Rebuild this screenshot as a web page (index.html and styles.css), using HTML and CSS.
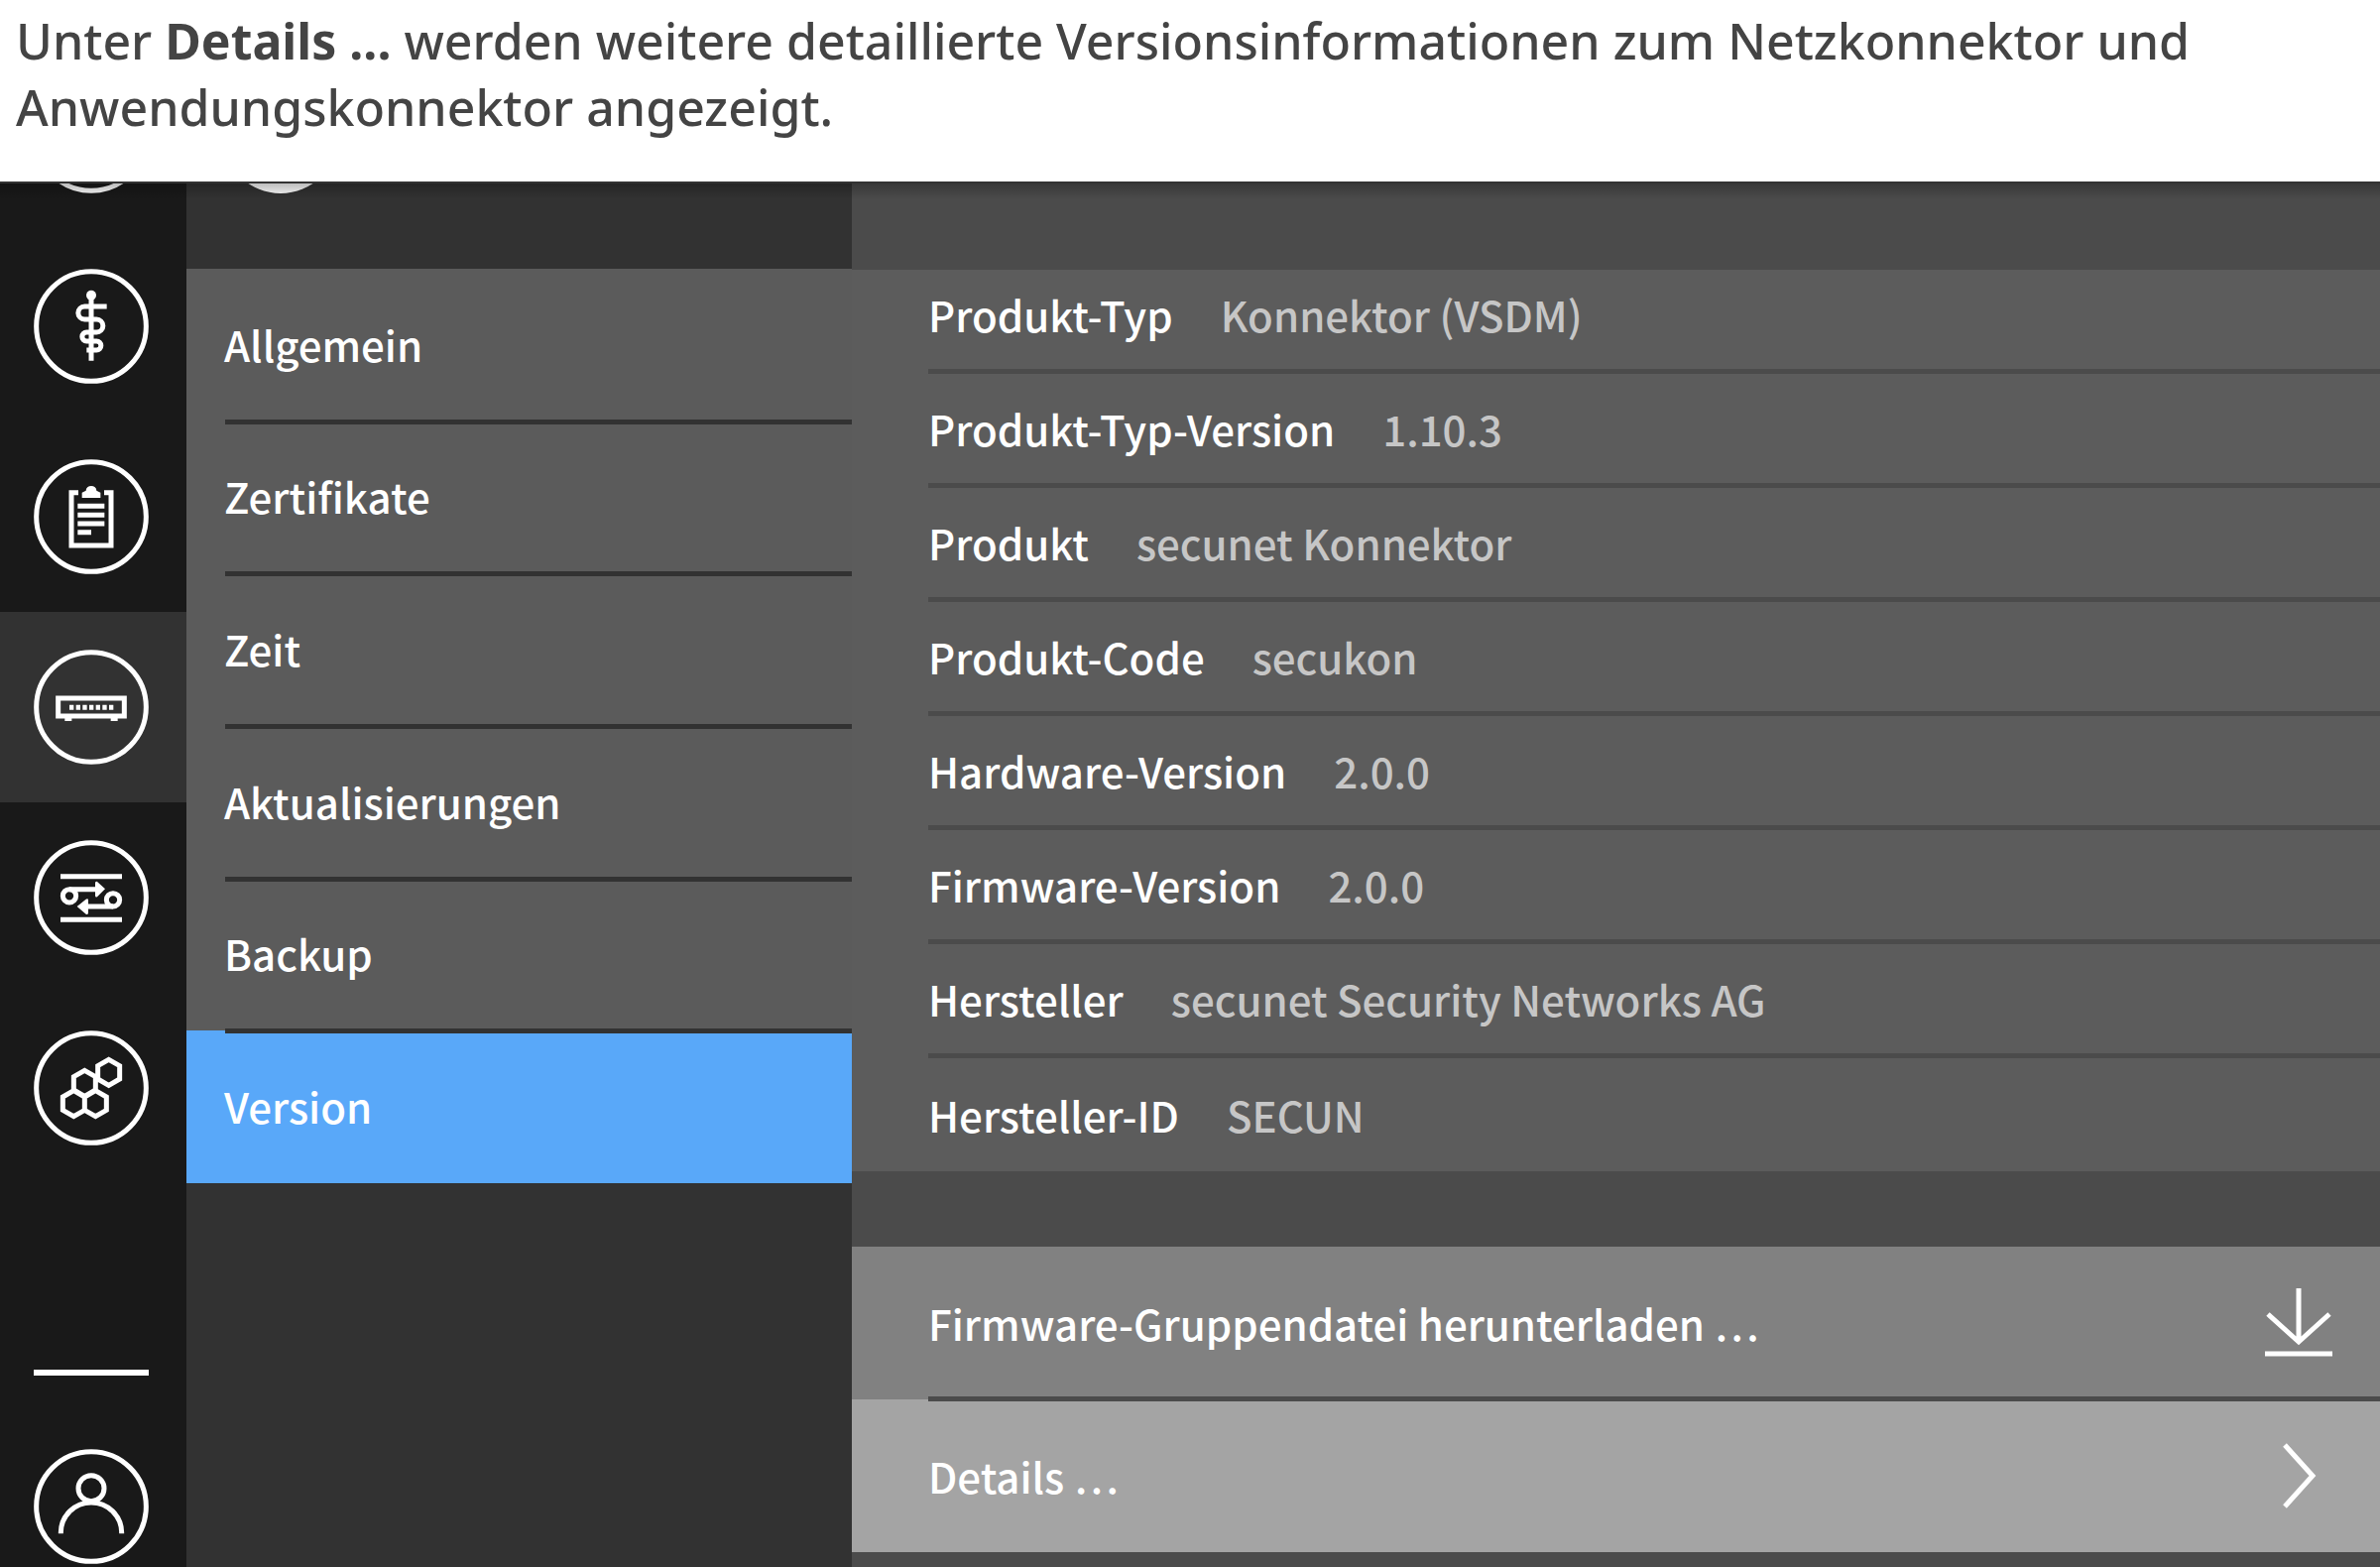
FILE: index.html
```html
<!DOCTYPE html>
<html lang="de">
<head>
<meta charset="utf-8">
<title>Konnektor – Version</title>
<link rel="stylesheet" href="styles.css">
</head>
<body>
<p class="intro">Unter <strong>Details ...</strong> werden weitere detaillierte Versionsinformationen zum Netzkonnektor und<br>Anwendungskonnektor angezeigt.</p>
<div class="app">
  <nav class="rail" aria-label="Bereiche">
    <a class="rail-item" href="#start" aria-label="Start">
      <svg class="rail-icon" viewBox="0 0 348 348"><circle cx="174" cy="174" r="166"/></svg>
    </a>
    <a class="rail-item" href="#praxis" aria-label="Praxis">
      <svg class="rail-icon" viewBox="0 0 348 348"><circle cx="174" cy="174" r="166"/><circle class="solid" cx="174" cy="80" r="15"/><path d="M174 80V278M221 114H154a19.500 19.500 0 0 0 0 39H190a19.500 19.500 0 0 1 0 39H160a13.500 13.500 0 0 0 0 27H190a13.500 13.500 0 0 1 0 27H160"/></svg>
    </a>
    <a class="rail-item" href="#protokoll" aria-label="Protokoll">
      <svg class="rail-icon" viewBox="0 0 348 348"><circle cx="174" cy="174" r="166"/><path d="M135 101H114V261H234V101H213M133 142H214M133 169H214M133 195H214M133 221H174"/><path class="solid" d="M146 117V101l12-6a16 14 0 0 1 32 0l12 6V117z"/></svg>
    </a>
    <a class="rail-item rail-item--active" href="#system" aria-label="System">
      <svg class="rail-icon" viewBox="0 0 348 348"><circle cx="174" cy="174" r="166"/><path d="M74 147H274V201H74z"/><path class="solid" d="M94 205h21v11h-21zM233 205h21v11h-21z"/><path class="solid" d="M108 167h13v15h-13zM128 167h13v15h-13zM148 167h13v15h-13zM168 167h13v15h-13zM188 167h13v15h-13zM208 167h13v15h-13zM228 167h13v15h-13z"/></svg>
    </a>
    <a class="rail-item" href="#netzwerk" aria-label="Netzwerk">
      <svg class="rail-icon" viewBox="0 0 348 348"><circle cx="174" cy="174" r="166"/><path d="M81 110H267M81 241H267M108 149H190M240 201H160"/><circle cx="108" cy="169" r="20"/><circle cx="240" cy="181" r="20"/><path class="solid" d="M216 148L192 126Q186 124 186 130V168Q186 174 192 172zM131 201L158 179Q165 176 165 182V220Q165 227 158 224z"/></svg>
    </a>
    <a class="rail-item" href="#module" aria-label="Module">
      <svg class="rail-icon" viewBox="0 0 348 348"><circle cx="174" cy="174" r="166"/><path d="M227 88l33 19v40l-33 19l-33-19v-40zM154 121l33 19v40l-33 19l-33-19v-40zM121 182l33 19v40l-33 19l-33-19v-40zM187 182l33 19v40l-33 19l-33-19v-40z"/></svg>
    </a>
    <hr class="rail-rule">
    <a class="rail-item" href="#benutzer" aria-label="Benutzer">
      <svg class="rail-icon" viewBox="0 0 348 348"><circle cx="174" cy="174" r="166"/><circle cx="174" cy="119" r="39"/><path d="M82 256v-3a92 91 0 0 1 184 0v3"/></svg>
    </a>
  </nav>

  <nav class="submenu" aria-label="System">
    <div class="submenu-head"><span class="submenu-badge"></span></div>
    <ul class="submenu-list">
      <li class="submenu-item"><a class="submenu-link" href="#allgemein">Allgemein</a></li>
      <li class="submenu-item"><a class="submenu-link" href="#zertifikate">Zertifikate</a></li>
      <li class="submenu-item"><a class="submenu-link" href="#zeit">Zeit</a></li>
      <li class="submenu-item"><a class="submenu-link" href="#aktualisierungen">Aktualisierungen</a></li>
      <li class="submenu-item"><a class="submenu-link" href="#backup">Backup</a></li>
      <li class="submenu-item submenu-item--active"><a class="submenu-link" href="#version" aria-current="page">Version</a></li>
    </ul>
  </nav>

  <main class="content">
    <dl class="facts">
      <div class="fact"><dt>Produkt-Typ</dt><dd>Konnektor (VSDM)</dd></div>
      <div class="fact"><dt>Produkt-Typ-Version</dt><dd>1.10.3</dd></div>
      <div class="fact"><dt>Produkt</dt><dd>secunet Konnektor</dd></div>
      <div class="fact"><dt>Produkt-Code</dt><dd>secukon</dd></div>
      <div class="fact"><dt>Hardware-Version</dt><dd>2.0.0</dd></div>
      <div class="fact"><dt>Firmware-Version</dt><dd>2.0.0</dd></div>
      <div class="fact"><dt>Hersteller</dt><dd>secunet Security Networks AG</dd></div>
      <div class="fact"><dt>Hersteller-ID</dt><dd>SECUN</dd></div>
    </dl>
    <div class="actions">
      <button class="action" type="button"><span>Firmware-Gruppendatei herunterladen …</span>
        <svg class="action-icon" viewBox="0 0 68 70"><path d="M34 0V54M3 26L34 54L65 26M0 66H68"/></svg>
      </button>
      <button class="action action--hover" type="button"><span>Details …</span>
        <svg class="action-icon" viewBox="0 0 68 70"><path d="M20 4L48 35L20 66"/></svg>
      </button>
    </div>
  </main>
</div>
</body>
</html>
```

FILE: styles.css
```css
* { box-sizing: border-box; }

body {
  margin: 0;
  height: 100vh;
  display: flex;
  flex-direction: column;
  overflow: hidden;
  background: #fff;
}

.intro {
  flex: none;
  margin: 0;
  padding: 8px 16px 41px;
  color: #444;
  font: 500 50px/67px "Noto Sans", sans-serif;
}

.intro strong { font-weight: 700; }

.app {
  position: relative;
  flex: 1;
  min-height: 0;
  display: grid;
  grid-template-columns: 188px 671px 1fr;
  overflow: hidden;
  border-top: 2px solid #333;
  background: #4b4b4b;
  color: #fff;
  font: 500 42px/64px "Noto Sans CJK SC", "Noto Sans", sans-serif;
}

/* Shadow that the bar above throws on the scrolled panels */
.app::before {
  content: "";
  position: absolute;
  inset: 0 0 auto;
  height: 16px;
  z-index: 2;
  background: linear-gradient(rgba(0, 0, 0, .26), transparent);
}

.rail {
  background: #191919;
  margin-top: -144px;
}

.rail-item {
  display: flex;
  align-items: center;
  height: 192px;
  padding-left: 34px;
}

.rail-item--active { background: #323232; }

.rail-icon {
  width: 116px;
  height: 116px;
  fill: none;
  stroke: #fff;
  stroke-width: 15;
}

.rail-icon .solid {
  fill: #fff;
  stroke: none;
}

.rail-rule {
  width: 116px;
  height: 6px;
  margin: 188px 38px 36px 34px;
  border: 0;
  background: #fff;
}

.submenu { background: #323232; }

.submenu-head {
  display: flex;
  align-items: flex-start;
  height: 86px;
  padding-left: 37px;
}

.submenu-badge {
  width: 116px;
  height: 116px;
  margin-top: -106px;
  border-radius: 50%;
  background: #fff;
}

.submenu-list {
  display: grid;
  grid-auto-rows: 1fr;
  height: 922px;
  margin: 0;
  padding: 0;
  list-style: none;
  background: #5b5b5b;
}

.submenu-item { position: relative; }

/* Divider laid across the seam of two entries */
.submenu-item:not(:last-child)::after {
  content: "";
  position: absolute;
  z-index: 1;
  inset: auto 0 -3px 39px;
  height: 5px;
  background: #323232;
}

.submenu-item--active { background: #59a8f9; }

.submenu-link {
  display: flex;
  align-items: center;
  height: 100%;
  padding: 0 0 2px 38px;
  color: inherit;
  text-decoration: none;
}

.content { padding-top: 87px; }

.facts {
  margin: 0 0 76px;
  padding-left: 77px;
  background: #5c5c5c;
}

.fact {
  display: flex;
  align-items: center;
  gap: 48px;
  height: 115px;
  border-bottom: 5px solid #4b4b4b;
}

.fact:first-child {
  height: 105px;
  padding-bottom: 10px;
}

.fact:last-child {
  height: 114px;
  border-bottom: 0;
}

.fact dd {
  margin: 0;
  color: #c6c6c6;
}

.action {
  position: relative;
  display: flex;
  align-items: center;
  justify-content: space-between;
  width: 100%;
  height: 154px;
  padding: 0 48px 0 77px;
  border: 0;
  background: #818181;
  color: inherit;
  font: inherit;
  text-align: left;
}

.action:not(:last-child)::after {
  content: "";
  position: absolute;
  z-index: 1;
  inset: auto 0 -2px 77px;
  height: 5px;
  background: #4b4b4b;
}

.action--hover { background: #a4a4a4; }

.action-icon {
  width: 68px;
  height: 70px;
  fill: none;
  stroke: #fff;
  stroke-width: 5;
}
```
